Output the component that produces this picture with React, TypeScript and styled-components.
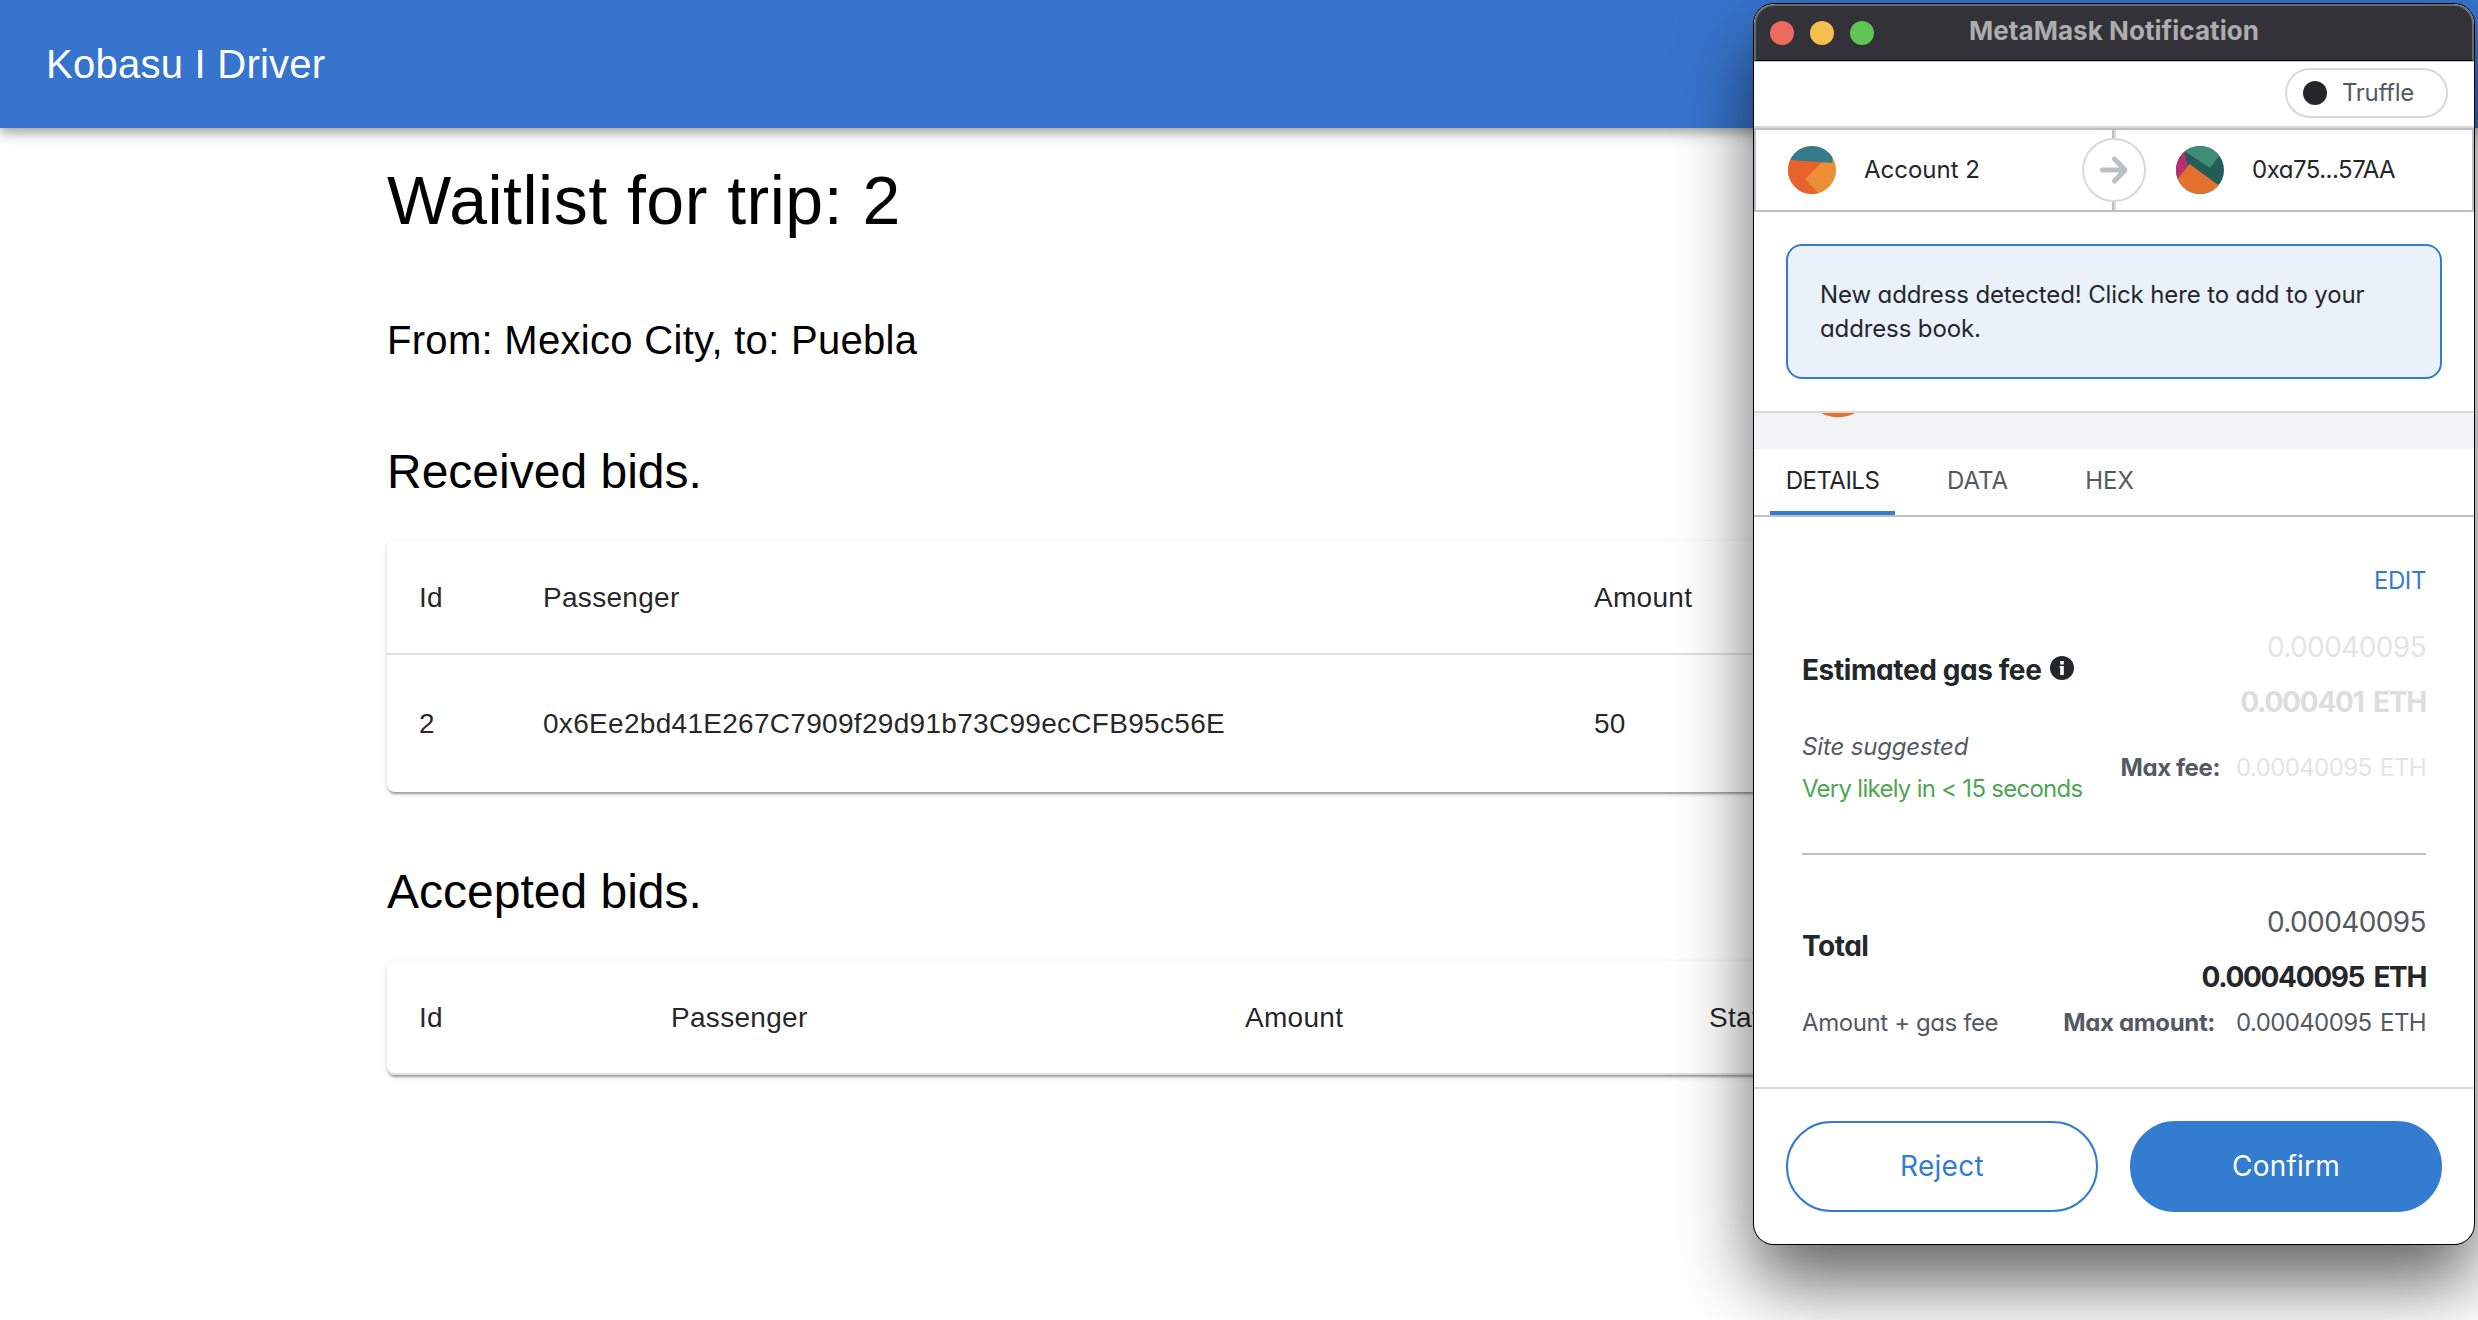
import React from 'react';
import styled, { createGlobalStyle } from 'styled-components';

const GlobalStyle = createGlobalStyle`
  *, *::before, *::after { box-sizing: border-box; }
  body { margin: 0; background: #fff; }
`;

const blue = '#347cd0';
const ink = '#24272a';
const muted = '#535a61';
const line = '#bbc0c5';
const softLine = '#d6d9dc';

/* ---------- Driver page ---------- */

const Page = styled.div`
  position: relative;
  width: 2478px;
  height: 1320px;
  overflow: hidden;
  background: #fff;
  color: #000;
  font-family: "Liberation Sans", Arial, sans-serif;
`;

const AppBar = styled.header`
  display: flex;
  align-items: center;
  height: 128px;
  padding: 0 46px;
  background: #3774cd;
  color: #fff;
  font-size: 40px;
  letter-spacing: 0.25px;
  box-shadow: 0 4px 8px -2px rgba(0, 0, 0, 0.2), 0 8px 10px rgba(0, 0, 0, 0.14),
    0 2px 20px rgba(0, 0, 0, 0.12);
`;

const Main = styled.main`
  width: 1704px;
  margin: 0 auto;
  padding-top: 30px;
`;

const PageTitle = styled.h1`
  margin: 0 0 66px;
  font-size: 68px;
  font-weight: 400;
  line-height: 84px;
  letter-spacing: 0.5px;
`;

const Route = styled.p`
  margin: 0 0 68px;
  font-size: 40px;
  line-height: 64px;
  letter-spacing: 0.3px;
`;

const SectionTitle = styled.h2`
  margin: 0 0 37px;
  font-size: 48px;
  font-weight: 400;
  line-height: 64px;
`;

const Card = styled.section`
  margin-bottom: 68px;
  border-radius: 8px;
  background: #fff;
  box-shadow: 0 4px 2px -2px rgba(0, 0, 0, 0.2), 0 2px 2px rgba(0, 0, 0, 0.14),
    0 2px 6px rgba(0, 0, 0, 0.12);
`;

const TableRow = styled.div<{ $cols: string; $head?: boolean }>`
  display: grid;
  grid-template-columns: ${(p) => p.$cols};
  align-items: center;
  height: ${(p) => (p.$head ? 114 : 137)}px;
  padding-top: ${(p) => (p.$head ? 2 : 0)}px;
  padding-left: 32px;
  border-bottom: ${(p) => (p.$head ? '2px solid #e0e0e0' : 'none')};
  color: rgba(0, 0, 0, 0.87);
  font-size: 28px;
  letter-spacing: 0.3px;

  &:last-child {
    border-radius: 0 0 8px 8px;
  }
`;

/* ---------- Wallet window ---------- */

const Window = styled.div`
  position: absolute;
  top: 4px;
  left: 1754px;
  width: 720px;
  height: 1240px;
  border-radius: 20px;
  background: #fff;
  box-shadow: 0 0 0 1px #000, 0 38px 72px rgba(0, 0, 0, 0.62);
  color: ${ink};
  font-family: Inter, "Noto Sans", sans-serif;
  font-size: 24px;
  line-height: 34px;
  font-feature-settings: "cv11" 1;
  overflow: hidden;
`;

const TitleBar = styled.div`
  display: grid;
  grid-template-columns: 112px 1fr 112px;
  align-items: center;
  height: 57px;
  padding: 0 14px;
  border: 2px solid #6b6b6f;
  border-bottom: 1px solid #000;
  border-radius: 20px 20px 0 0;
  background: #333238;
`;

const Lights = styled.div`
  display: flex;
  gap: 16px;
`;

const Light = styled.i<{ $color: string }>`
  width: 24px;
  height: 24px;
  border-radius: 50%;
  background: ${(p) => p.$color};
`;

const WindowTitle = styled.div`
  padding-bottom: 5px;
  text-align: center;
  color: #adadaf;
  font-size: 26px;
  font-weight: 700;
  font-feature-settings: normal;
  letter-spacing: 0.05px;
  white-space: nowrap;
`;

const Txt = styled.span<{ $ls?: number; $ws?: number }>`
  letter-spacing: ${(p) => p.$ls ?? 0}px;
  word-spacing: ${(p) => p.$ws ?? 0}px;
  white-space: nowrap;
`;

const NetworkBar = styled.div`
  display: flex;
  justify-content: flex-end;
  height: 67px;
  padding: 6px 26px 0 0;
  border-top: 1px solid #c4c4c6;
  border-bottom: 2px solid ${softLine};
`;

const NetworkPill = styled.div`
  display: flex;
  align-items: center;
  gap: 15px;
  width: 163px;
  height: 50px;
  padding: 0 0 1px 16px;
  border: 2px solid ${softLine};
  border-radius: 25px;
  color: ${muted};
`;

const Dot = styled.i`
  width: 24px;
  height: 24px;
  border-radius: 50%;
  background: ${ink};
`;

const Parties = styled.div`
  position: relative;
  display: grid;
  grid-template-columns: 1fr 1fr;
  height: 84px;
  border: 2px solid ${line};
`;

const Party = styled.div<{ $recipient?: boolean }>`
  display: flex;
  align-items: center;
  gap: 28px;
  padding-left: ${(p) => (p.$recipient ? 60 : 32)}px;
  border-left: ${(p) => (p.$recipient ? `2px solid ${softLine}` : 'none')};
  border-right: ${(p) => (p.$recipient ? 'none' : `2px solid ${line}`)};
`;

const ArrowBadge = styled.div`
  position: absolute;
  top: 50%;
  left: 50%;
  display: grid;
  place-items: center;
  width: 64px;
  height: 64px;
  border: 2px solid ${softLine};
  border-radius: 50%;
  background: #fff;
  transform: translate(-50%, -50%);
`;

const NoticeArea = styled.div`
  height: 201px;
  padding: 32px;
  border-bottom: 2px solid #d8d9dc;
`;

const Notice = styled.div`
  height: 135px;
  padding: 32px 32px 30px;
  border: 2px solid ${blue};
  border-radius: 16px;
  background: #eaf1fa;
`;

const Band = styled.div`
  height: 36px;
  padding-left: 67px;
  background: #f2f3f4;

  svg {
    display: block;
  }
`;

const Tabs = styled.nav`
  display: flex;
  height: 68px;
  padding-left: 16px;
  border-bottom: 2px solid ${line};
`;

const Tab = styled.div<{ $width: number; $active?: boolean }>`
  display: flex;
  align-items: center;
  justify-content: center;
  width: ${(p) => p.$width}px;
  padding-top: 2px;
  border-bottom: 4px solid ${(p) => (p.$active ? blue : 'transparent')};
  color: ${(p) => (p.$active ? ink : muted)};
`;

const Details = styled.div`
  height: 570px;
  padding: 47px 48px 0;
`;

const EditRow = styled.div`
  display: flex;
  justify-content: flex-end;
  margin-bottom: 29px;
  color: ${blue};
`;

const SplitRow = styled.div<{ $gap?: number }>`
  display: flex;
  justify-content: space-between;
  margin-top: ${(p) => p.$gap ?? 0}px;
`;

const Label = styled.div<{ $top: number }>`
  display: flex;
  align-items: center;
  gap: 9px;
  height: 40px;
  margin-top: ${(p) => p.$top}px;
  font-size: 28px;
  font-weight: 700;

  svg {
    margin-bottom: 4px;
  }
`;

const Amounts = styled.div`
  display: flex;
  flex-direction: column;
  align-items: flex-end;
  gap: 15px;
  font-size: 28px;
  line-height: 40px;
`;

const Amount = styled(Txt)<{ $strong?: boolean; $faded?: boolean }>`
  font-weight: ${(p) => (p.$strong ? 700 : 400)};
  color: ${(p) => (p.$faded ? (p.$strong ? '#dcdddd' : '#e3e4e5') : p.$strong ? ink : muted)};
`;

const Notes = styled.div`
  display: flex;
  flex-direction: column;
  gap: 8px;
  color: ${muted};
`;

const Suggested = styled(Txt)`
  font-style: italic;
`;

const Likely = styled(Txt)`
  color: #4fa553;
`;

const MaxLine = styled.div<{ $gap: number }>`
  display: flex;
  align-items: center;
  gap: ${(p) => p.$gap}px;
  color: ${muted};
`;

const MaxLabel = styled(Txt)`
  font-weight: 700;
`;

const Divider = styled.hr`
  height: 2px;
  margin: 47px 0;
  border: 0;
  background: ${line};
`;

const Footer = styled.footer`
  display: grid;
  grid-template-columns: 1fr 1fr;
  gap: 32px;
  padding: 32px;
  border-top: 2px solid ${softLine};
`;

const Button = styled.button<{ $primary?: boolean }>`
  height: 91px;
  padding: 0 0 1px;
  border: 2px solid ${blue};
  border-radius: 46px;
  background: ${(p) => (p.$primary ? blue : '#fff')};
  color: ${(p) => (p.$primary ? '#fff' : blue)};
  font: inherit;
  font-size: 28px;
  font-feature-settings: inherit;
`;

const SenderAvatar = () => (
  <svg width="48" height="48" viewBox="0 0 48 48">
    <clipPath id="sender"><circle cx="24" cy="24" r="24" /></clipPath>
    <g clipPath="url(#sender)">
      <rect width="48" height="48" fill="#ec8e35" />
      <path d="M0 13L34 16L17 33.3L31 48H0Z" fill="#e8622b" />
      <path d="M0 32L9 44L0 48Z" fill="#f0b02c" />
      <path d="M3 34L10 44L14 48H20L3 28Z" fill="#e8622b" />
      <path d="M0 13.8L44.4 17V0H0Z" fill="#347c8b" />
    </g>
  </svg>
);

const RecipientAvatar = () => (
  <svg width="48" height="48" viewBox="0 0 48 48">
    <clipPath id="recipient"><circle cx="24" cy="24" r="24" /></clipPath>
    <g clipPath="url(#recipient)">
      <rect width="48" height="48" fill="#265c58" />
      <path d="M0 0L7 4L34 22L45 7V0Z" fill="#3d8e74" />
      <path d="M0 0L10 5.5L8.6 8L12 21L2 34L0 34Z" fill="#b72e73" />
      <path d="M13.5 18L43 39.5L40 48H0L2 32.5Z" fill="#e2712d" />
    </g>
  </svg>
);

const Arrow = () => (
  <svg width="32" height="32" viewBox="0 0 32 32" fill="none" stroke={line} strokeWidth="5" strokeLinecap="round" strokeLinejoin="round">
    <path d="M4.5 16H26M16.5 5L27 16L16.5 27" />
  </svg>
);

const InfoIcon = () => (
  <svg width="24" height="24" viewBox="0 0 24 24">
    <circle cx="12" cy="12" r="12" fill={ink} />
    <path d="M10.2 5H13.8V8.4H10.2ZM9.6 10H13.8V18.9H10.2V11.6H9.6Z" fill="#fff" />
  </svg>
);

const receivedCols = '124px 1051px 1fr';
const acceptedCols = '252px 574px 464px 1fr';

export default function App() {
  return (
    <Page>
      <GlobalStyle />
      <AppBar>Kobasu I Driver</AppBar>
      <Main>
        <PageTitle>Waitlist for trip: 2</PageTitle>
        <Route>From: Mexico City, to: Puebla</Route>
        <SectionTitle>Received bids.</SectionTitle>
        <Card>
          <TableRow $cols={receivedCols} $head>
            <span>Id</span>
            <span>Passenger</span>
            <span>Amount</span>
          </TableRow>
          <TableRow $cols={receivedCols}>
            <span>2</span>
            <span>0x6Ee2bd41E267C7909f29d91b73C99ecCFB95c56E</span>
            <span>50</span>
          </TableRow>
        </Card>
        <SectionTitle>Accepted bids.</SectionTitle>
        <Card>
          <TableRow $cols={acceptedCols} $head>
            <span>Id</span>
            <span>Passenger</span>
            <span>Amount</span>
            <span>Status</span>
          </TableRow>
        </Card>
      </Main>

      <Window>
        <TitleBar>
          <Lights>
            <Light $color="#ed6a5e" />
            <Light $color="#f5bf4f" />
            <Light $color="#61c554" />
          </Lights>
          <WindowTitle>MetaMask Notification</WindowTitle>
        </TitleBar>
        <NetworkBar>
          <NetworkPill>
            <Dot />
            <Txt $ls={-0.3}>Truffle</Txt>
          </NetworkPill>
        </NetworkBar>
        <Parties>
          <Party>
            <SenderAvatar />
            <Txt>Account 2</Txt>
          </Party>
          <Party $recipient>
            <RecipientAvatar />
            <Txt $ls={-0.5}>0xa75...57AA</Txt>
          </Party>
          <ArrowBadge>
            <Arrow />
          </ArrowBadge>
        </Parties>
        <NoticeArea>
          <Notice>
            <Txt $ls={-0.12}>
              New address detected! Click here to add to your
              <br />
              address book.
            </Txt>
          </Notice>
        </NoticeArea>
        <Band>
          <svg width="34" height="5" viewBox="0 0 34 5">
            <path d="M0 0H34Q17 8.6 0 0Z" fill="#e2712d" />
          </svg>
        </Band>
        <Tabs>
          <Tab $width={125} $active><Txt $ls={-0.5}>DETAILS</Txt></Tab>
          <Tab $width={165}><Txt>DATA</Txt></Tab>
          <Tab $width={99}><Txt>HEX</Txt></Tab>
        </Tabs>
        <Details>
          <EditRow><Txt $ls={-0.4}>EDIT</Txt></EditRow>
          <SplitRow>
            <Label $top={23}>
              <Txt $ls={-0.4}>Estimated gas fee</Txt>
              <InfoIcon />
            </Label>
            <Amounts>
              <Amount $ls={-0.6} $faded>0.00040095</Amount>
              <Amount $ls={-1.22} $ws={4} $faded $strong>0.000401 ETH</Amount>
            </Amounts>
          </SplitRow>
          <SplitRow $gap={8}>
            <Notes>
              <Suggested $ls={-0.15}>Site suggested</Suggested>
              <Likely $ls={-0.73}>Very likely in &lt; 15 seconds</Likely>
            </Notes>
            <MaxLine $gap={16}>
              <MaxLabel $ls={-0.4}>Max fee:</MaxLabel>
              <Amount $ls={-0.61} $ws={2.5} $faded>0.00040095 ETH</Amount>
            </MaxLine>
          </SplitRow>
          <Divider />
          <SplitRow>
            <Label $top={24}><Txt $ls={-0.5}>Total</Txt></Label>
            <Amounts>
              <Amount $ls={-0.6}>0.00040095</Amount>
              <Amount $ls={-1.34} $ws={4} $strong>0.00040095 ETH</Amount>
            </Amounts>
          </SplitRow>
          <SplitRow $gap={9}>
            <Notes><Txt $ls={-0.4}>Amount + gas fee</Txt></Notes>
            <MaxLine $gap={21}>
              <MaxLabel $ls={-0.35}>Max amount:</MaxLabel>
              <Amount $ls={-0.61} $ws={2.5}>0.00040095 ETH</Amount>
            </MaxLine>
          </SplitRow>
        </Details>
        <Footer>
          <Button><Txt $ls={0.3}>Reject</Txt></Button>
          <Button $primary><Txt $ls={0.2}>Confirm</Txt></Button>
        </Footer>
      </Window>
    </Page>
  );
}
